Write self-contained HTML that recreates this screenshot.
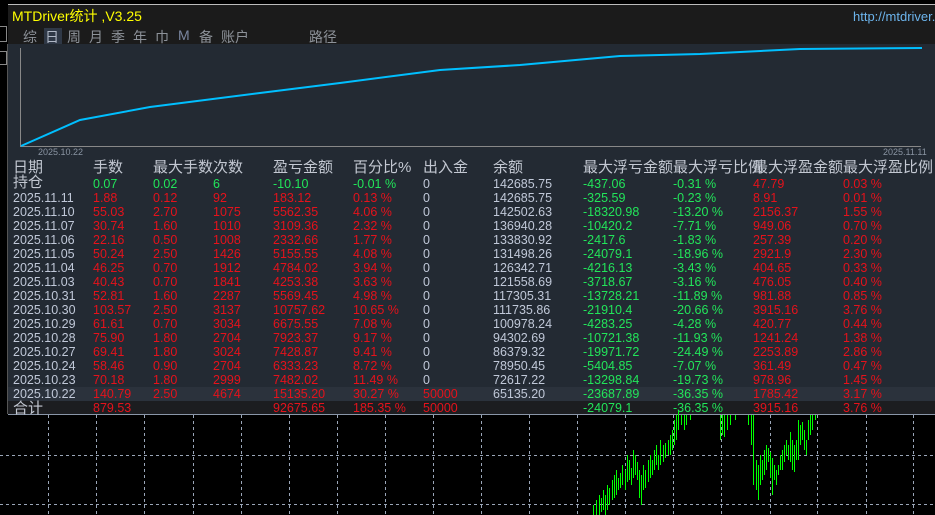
<!DOCTYPE html>
<html><head><meta charset="utf-8"><style>
*{margin:0;padding:0}
body{width:935px;height:515px;background:#000;position:relative;overflow:hidden;font-family:"Liberation Sans","Noto Sans CJK SC",sans-serif}
.a{position:absolute;white-space:nowrap}
#hdr{position:absolute;left:8px;top:4px;width:927px;height:40px;background:#1b1b1b;border-top:1px solid #bbb}
#panel{position:absolute;left:8px;top:44px;width:927px;height:357px;background:#232a33}
#tot{position:absolute;left:8px;top:401px;width:927px;height:13px;background:#1c1d20;border-bottom:1px solid #8a96a8}
#hl{position:absolute;left:8px;top:387px;width:927px;height:14px;background:#2b323c}
.t{font-size:14px;color:#8d9299;top:27px}
.h{font-size:15px;color:#c3c8d2;top:160px;line-height:16px}
.r{font-size:12.5px;line-height:14px}
.w{color:#c0c8d8}.g{color:#22e55a}.d{color:#e5121b}
</style></head><body>
<div id="hdr"></div>
<div id="panel"></div>
<div id="hl"></div>
<div id="tot"></div>
<div class="a" style="left:0;top:26px;width:6px;height:14px;border:1px solid #888;border-left:none"></div>
<div class="a" style="left:0;top:51px;width:6px;height:12px;border:1px solid #888;border-left:none"></div>
<div class="a" style="left:7px;top:44px;width:1px;height:370px;background:#555"></div>
<div class="a" style="left:12px;top:6px;font-size:14px;color:#ffff00">MTDriver统计 ,V3.25</div>
<div class="a" style="left:853px;top:9px;font-size:13px;color:#6cb4ec">http://mtdriver.</div>
<div class="a" style="left:44px;top:28px;width:18px;height:16px;background:#2f3846"></div>
<div class="a t" style="left:23px">综</div>
<div class="a t" style="left:45px;color:#b0b8c6">日</div>
<div class="a t" style="left:67px">周</div>
<div class="a t" style="left:89px">月</div>
<div class="a t" style="left:111px">季</div>
<div class="a t" style="left:133px">年</div>
<div class="a t" style="left:155px">巾</div>
<div class="a t" style="left:178px;color:#7a86a0">M</div>
<div class="a t" style="left:199px">备</div>
<div class="a t" style="left:221px">账户</div>
<div class="a t" style="left:309px">路径</div>
<svg class="a" style="left:0;top:0" width="935" height="515">
<line x1="20.5" y1="48" x2="20.5" y2="146" stroke="#888"/>
<line x1="20" y1="146.5" x2="921" y2="146.5" stroke="#888"/>
<polyline fill="none" stroke="#00bfff" stroke-width="2" points="21,146 80,120 150,107 260,93 340,83 440,70 520,65 620,56 700,54 800,49 922,48"/>
<g stroke="#9aa6b8" stroke-dasharray="3,3" stroke-width="1">
<line x1="0" y1="455.5" x2="935" y2="455.5"/><line x1="0" y1="504.5" x2="935" y2="504.5"/>
<line x1="48.5" y1="415" x2="48.5" y2="515"/><line x1="96.5" y1="415" x2="96.5" y2="515"/><line x1="144.5" y1="415" x2="144.5" y2="515"/><line x1="193.5" y1="415" x2="193.5" y2="515"/><line x1="241.5" y1="415" x2="241.5" y2="515"/><line x1="289.5" y1="415" x2="289.5" y2="515"/><line x1="337.5" y1="415" x2="337.5" y2="515"/><line x1="385.5" y1="415" x2="385.5" y2="515"/><line x1="433.5" y1="415" x2="433.5" y2="515"/><line x1="481.5" y1="415" x2="481.5" y2="515"/><line x1="529.5" y1="415" x2="529.5" y2="515"/><line x1="577.5" y1="415" x2="577.5" y2="515"/><line x1="625.5" y1="415" x2="625.5" y2="515"/><line x1="673.5" y1="415" x2="673.5" y2="515"/><line x1="721.5" y1="415" x2="721.5" y2="515"/><line x1="770.5" y1="415" x2="770.5" y2="515"/><line x1="817.5" y1="415" x2="817.5" y2="515"/><line x1="866.5" y1="415" x2="866.5" y2="515"/><line x1="913.5" y1="415" x2="913.5" y2="515"/>
</g>
<path stroke="#00ff00" stroke-width="1" shape-rendering="crispEdges" fill="none" d="M593.5 505V515M596.5 500V515M599.5 495V515M601.5 498V512M603.5 490V510M605.5 495V515M607.5 485V510M609.5 488V505M612.5 480V500M614.5 475V498M616.5 470V495M618.5 478V490M620.5 473V488M622.5 465V485M625.5 470V490M627.5 455V482M629.5 460V480M631.5 468V485M633.5 450V478M635.5 455V475M637.5 462V480M639.5 470V498M641.5 475V505M643.5 465V490M645.5 470V488M648.5 460V482M650.5 455V478M652.5 460V475M654.5 450V470M656.5 445V465M658.5 455V470M660.5 440V465M663.5 445V462M665.5 443V458M668.5 440V455M670.5 435V455M672.5 430V450M674.5 420V445M676.5 415V440M678.5 410V430M681.5 415V425M684.5 415V430M686.5 415V425M690.5 415V420M720.5 415V440M722.5 415V435M724.5 415V437M727.5 415V430M730.5 415V425M735.5 415V420M748.5 415V425M751.5 415V445M753.5 415V485M756.5 460V490M758.5 465V500M760.5 455V485M762.5 460V480M764.5 450V475M766.5 445V470M768.5 448V462M770.5 452V478M772.5 458V495M774.5 465V480M776.5 470V485M778.5 465V475M780.5 455V470M782.5 450V470M784.5 445V462M786.5 440V455M788.5 445V460M790.5 432V462M792.5 440V470M794.5 445V472M796.5 440V460M798.5 420V460M800.5 425V445M802.5 422V440M804.5 430V450M806.5 440V455M808.5 420V440M810.5 415V435M812.5 415V430M815.5 415V420"/>
</svg>
<div class="a" style="left:38px;top:147px;font-size:9px;color:#8a94a2">2025.10.22</div>
<div class="a" style="left:883px;top:147px;font-size:9px;color:#8a94a2">2025.11.11</div>
<div class="a h" style="left:13px">日期</div>
<div class="a h" style="left:93px">手数</div>
<div class="a h" style="left:153px">最大手数</div>
<div class="a h" style="left:213px">次数</div>
<div class="a h" style="left:273px">盈亏金额</div>
<div class="a h" style="left:353px">百分比%</div>
<div class="a h" style="left:423px">出入金</div>
<div class="a h" style="left:493px">余额</div>
<div class="a h" style="left:583px">最大浮亏金额</div>
<div class="a h" style="left:673px">最大浮亏比例</div>
<div class="a h" style="left:753px">最大浮盈金额</div>
<div class="a h" style="left:843px">最大浮盈比例</div>

<div class="a" style="left:13px;top:175px;font-size:15px;line-height:15px;color:#c3c8d2">持仓</div>
<div class="a r w" style="left:13px;top:191px">2025.11.11<br>2025.11.10<br>2025.11.07<br>2025.11.06<br>2025.11.05<br>2025.11.04<br>2025.11.03<br>2025.10.31<br>2025.10.30<br>2025.10.29<br>2025.10.28<br>2025.10.27<br>2025.10.24<br>2025.10.23<br>2025.10.22</div>
<div class="a" style="left:13px;top:401px;font-size:15px;line-height:15px;color:#c3c8d2">合计</div>

<div class="a r g" style="left:93px;top:177px">0.07</div>
<div class="a r d" style="left:93px;top:191px">1.88<br>55.03<br>30.74<br>22.16<br>50.24<br>46.25<br>40.43<br>52.81<br>103.57<br>61.61<br>75.90<br>69.41<br>58.46<br>70.18<br>140.79<br>879.53</div>
<div class="a r g" style="left:153px;top:177px">0.02</div>
<div class="a r d" style="left:153px;top:191px">0.12<br>2.70<br>1.60<br>0.50<br>2.50<br>0.70<br>0.70<br>1.60<br>2.50<br>0.70<br>1.80<br>1.80<br>0.90<br>1.80<br>2.50</div>
<div class="a r g" style="left:213px;top:177px">6</div>
<div class="a r d" style="left:213px;top:191px">92<br>1075<br>1010<br>1008<br>1426<br>1912<br>1841<br>2287<br>3137<br>3034<br>2704<br>3024<br>2704<br>2999<br>4674</div>
<div class="a r g" style="left:273px;top:177px">-10.10</div>
<div class="a r d" style="left:273px;top:191px">183.12<br>5562.35<br>3109.36<br>2332.66<br>5155.55<br>4784.02<br>4253.38<br>5569.45<br>10757.62<br>6675.55<br>7923.37<br>7428.87<br>6333.23<br>7482.02<br>15135.20<br>92675.65</div>
<div class="a r g" style="left:353px;top:177px">-0.01 %</div>
<div class="a r d" style="left:353px;top:191px">0.13 %<br>4.06 %<br>2.32 %<br>1.77 %<br>4.08 %<br>3.94 %<br>3.63 %<br>4.98 %<br>10.65 %<br>7.08 %<br>9.17 %<br>9.41 %<br>8.72 %<br>11.49 %<br>30.27 %<br>185.35 %</div>
<div class="a r w" style="left:423px;top:177px">0<br>0<br>0<br>0<br>0<br>0<br>0<br>0<br>0<br>0<br>0<br>0<br>0<br>0<br>0</div>
<div class="a r d" style="left:423px;top:387px">50000<br>50000</div>
<div class="a r w" style="left:493px;top:177px">142685.75<br>142685.75<br>142502.63<br>136940.28<br>133830.92<br>131498.26<br>126342.71<br>121558.69<br>117305.31<br>111735.86<br>100978.24<br>94302.69<br>86379.32<br>78950.45<br>72617.22<br>65135.20</div>
<div class="a r g" style="left:583px;top:177px">-437.06<br>-325.59<br>-18320.98<br>-10420.2<br>-2417.6<br>-24079.1<br>-4216.13<br>-3718.67<br>-13728.21<br>-21910.4<br>-4283.25<br>-10721.38<br>-19971.72<br>-5404.85<br>-13298.84<br>-23687.89<br>-24079.1</div>
<div class="a r g" style="left:673px;top:177px">-0.31 %<br>-0.23 %<br>-13.20 %<br>-7.71 %<br>-1.83 %<br>-18.96 %<br>-3.43 %<br>-3.16 %<br>-11.89 %<br>-20.66 %<br>-4.28 %<br>-11.93 %<br>-24.49 %<br>-7.07 %<br>-19.73 %<br>-36.35 %<br>-36.35 %</div>
<div class="a r d" style="left:753px;top:177px">47.79<br>8.91<br>2156.37<br>949.06<br>257.39<br>2921.9<br>404.65<br>476.05<br>981.88<br>3915.16<br>420.77<br>1241.24<br>2253.89<br>361.49<br>978.96<br>1785.42<br>3915.16</div>
<div class="a r d" style="left:843px;top:177px">0.03 %<br>0.01 %<br>1.55 %<br>0.70 %<br>0.20 %<br>2.30 %<br>0.33 %<br>0.40 %<br>0.85 %<br>3.76 %<br>0.44 %<br>1.38 %<br>2.86 %<br>0.47 %<br>1.45 %<br>3.17 %<br>3.76 %</div>
</body></html>
